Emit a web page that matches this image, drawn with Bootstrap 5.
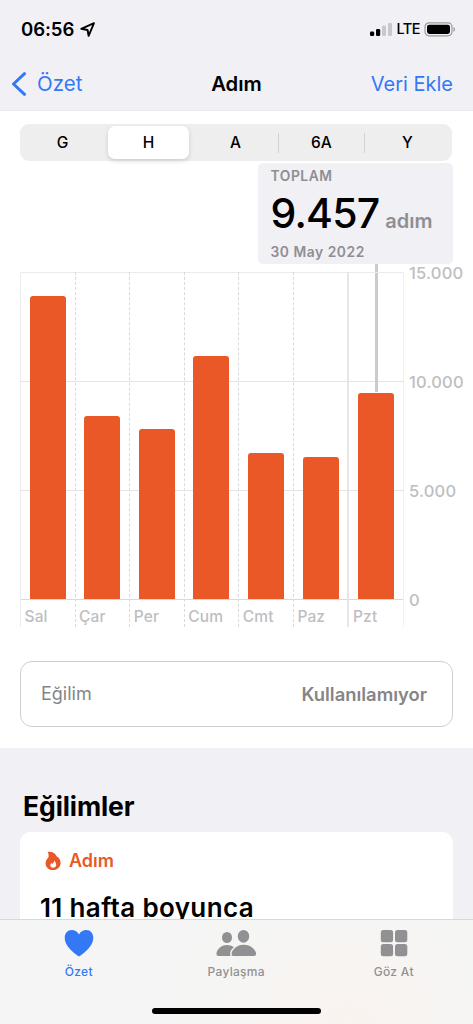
<!DOCTYPE html>
<html lang="tr">
<head>
  <meta charset="UTF-8">
  <meta name="viewport" content="width=device-width, initial-scale=1.0">
  <title>Adım</title>
  <link href="https://cdn.jsdelivr.net/npm/bootstrap@5.3.2/dist/css/bootstrap.min.css" rel="stylesheet">
  <style>
    body { font-family: Inter, "Liberation Sans", sans-serif; background-color: #f1f0f5; color: #000; }
    .phone { width: 473px; height: 1024px; line-height: 1; white-space: nowrap; }
    .blue { color: #3478f6; }
    .orange { color: #e95826; }
    .gray { color: #8e8e93; }

    .top-area { height: 111px; border-bottom: 1px solid #ebebef; }
    .status { height: 58px; padding: 0 18px 0 21px; font-weight: 600; }
    .clock { font-size: 18.6px; letter-spacing: -.1px; }
    .lte { font-size: 14.5px; font-weight: 500; letter-spacing: -.5px; margin-left: 4px; }
    .title-bar { height: 51px; padding: 0 20px; font-size: 20px; }
    .title-bar > div { flex: 1; }
    .back { font-size: 20.5px; margin-left: 10px; padding-top: 1px; }
    .chevron { margin-left: -9px; }
    .page-title { font-size: 20.3px; font-weight: 600; padding-top: 1px; }

    .chart-area { height: 637px; padding: 13px 20px 0; }
    .segments { height: 37px; width: 432px; border-radius: 9px; background-color: #eeeeef; padding: 2px; font-size: 15.5px; font-weight: 500; }
    .seg { flex: 1; height: 33px; padding-top: 1px; }
    .seg-first { flex: 0 0 81px; }
    .seg-on { flex: 0 0 81px; margin: 0 4px 0 5px; background-color: #fff; border-radius: 7px; box-shadow: 0 2px 5px rgba(0,0,0,.14); }
    .seg-line { width: 1px; height: 20px; background-color: #d2d2d6; }

    .callout { width: 195px; height: 101px; margin: 2px 0 0 238px; border-radius: 5px; background-color: #f1f0f5; padding: 6px 12.5px 0; }
    .callout-label { font-size: 13.8px; font-weight: 600; line-height: 15px; letter-spacing: .55px; }
    .big-num { font-size: 41px; font-weight: 500; line-height: 46px; margin: 6px 0 1px; letter-spacing: -.8px; }
    .unit { font-size: 20px; font-weight: 600; letter-spacing: 0; margin-left: 6px; }

    .plot { height: 355px; width: 384px; margin-top: 8px; }
    .day { flex: 1; height: 355px; border-left: 1px dashed #dadadd; }
    .day-first { border-left: 1px solid #ececee; }
    .day:last-child { border-left: 2px solid #e6e6ea; border-right: 1px solid #f1f1f3; }
    .bar-space { height: 328px; border-top: 1px solid #ebebed; border-bottom: 1px solid #d9d9dc; }
    .bar { width: 36px; margin-left: 8.7px; border-radius: 3px 3px 0 0; background-color: #e95826; }
    .day-name { font-size: 15.5px; font-weight: 500; color: #bebec1; padding: 9px 0 0 3.5px; letter-spacing: .15px; }
    .scale { height: 355px; font-size: 16.5px; font-weight: 500; color: #bebec1; width: 60px; margin: 8px 0 0 5px; letter-spacing: .2px; }
    .scale div { height: 109px; line-height: 2px; }
    .grid-row { left: 0; width: 384px; height: 1px; background-color: #e4e4e7; }
    .pointer { left: 355px; top: -8px; width: 2.5px; height: 128px; background-color: #cbcbce; }

    .trend { height: 66px; width: 433px; margin-top: 34px; border: 1px solid #cfcfd2; border-radius: 12px; padding: 0 25px 0 20px; font-size: 18px; color: #858588; }
    .trend-value { font-size: 18.4px; font-weight: 600; }

    .trends { padding: 45px 20px 0; }
    .trends h2 { font-size: 26.5px; font-weight: 700; letter-spacing: -.1px; line-height: 26px; padding-left: 3px; margin: 0 0 13px; }
    .trend-card { width: 433px; height: 110px; border-radius: 11px; background-color: #fff; padding: 19px 20px 0; }
    .card-name { font-size: 18px; font-weight: 600; margin-left: 5px; }
    .headline { font-size: 26px; font-weight: 600; line-height: 30px; margin-top: 22px; letter-spacing: .35px; }

    .tab-area { left: 0; bottom: 0; width: 473px; height: 105px; border-top: 1px solid #d8d8da; background: radial-gradient(circle at 350px 115px, #faf3ef 0, #f6f5f4 120px, #f5f5f5 190px); font-size: 12px; font-weight: 500; letter-spacing: .3px; }
    .tab-area a { width: 157.5px; color: #919193; text-decoration: none; }
    .tab-area a.blue { color: #3478f6; }
    .tab-area svg { display: block; margin: 8px auto 8px; }
    .home-line { width: 169px; height: 6px; left: 152px; bottom: 10px; border-radius: 3px; background-color: #000; }
  </style>
</head>
<body>

  <div class="phone position-relative overflow-hidden">

    <header class="top-area">
      <div class="status d-flex align-items-center justify-content-between">
        <div class="d-flex align-items-center">
          <span class="clock">06:56</span>
          <svg style="margin-left: 5px" width="17" height="17" viewBox="0 0 17 17"><path d="M2.2 7.8 15 2.2 9.600 14.800 8.600 9Z" fill="none" stroke="#000" stroke-width="1.9" stroke-linejoin="round"/></svg>
        </div>
        <div class="d-flex align-items-center">
          <svg width="22" height="15" viewBox="0 0 22 15"><rect x="0" y="9.500" width="4.200" height="4.500" rx="1.300"/><rect x="6" y="7" width="4.200" height="7" rx="1.300"/><rect x="12" y="3.500" width="4" height="10.500" rx="1.200" fill="#c9c9cd"/><rect x="18" y="1" width="4" height="13" rx="1.200" fill="#c9c9cd"/></svg>
          <span class="lte">LTE</span>
          <svg class="ms-1" width="31" height="15" viewBox="0 0 31 15"><rect x="1" y=".8" width="27" height="13" rx="4" fill="none" stroke="#9b9b9e" stroke-width="1.200"/><rect x="3" y="2.700" width="23" height="9.200" rx="2.300"/><path d="M29.500 5v5c2-.8 2-4.200 0-5Z" fill="#9b9b9e"/></svg>
        </div>
      </div>
      <div class="title-bar d-flex align-items-center">
        <div class="blue d-flex align-items-center">
          <svg class="chevron" width="16" height="24" viewBox="0 0 16 24"><path d="M13.500 1.700 2.500 12l11 10.300" fill="none" stroke="#3478f6" stroke-width="3" stroke-linecap="round" stroke-linejoin="round"/></svg>
          <span class="back">Özet</span>
        </div>
        <span class="page-title">Adım</span>
        <div class="blue text-end">Veri Ekle</div>
      </div>
    </header>

    <section class="chart-area bg-white">
      <div class="segments d-flex align-items-center">
        <div class="seg seg-first d-flex align-items-center justify-content-center">G</div>
        <div class="seg seg-on d-flex align-items-center justify-content-center">H</div>
        <div class="seg d-flex align-items-center justify-content-center">A</div>
        <div class="seg-line"></div>
        <div class="seg d-flex align-items-center justify-content-center">6A</div>
        <div class="seg-line"></div>
        <div class="seg d-flex align-items-center justify-content-center">Y</div>
      </div>

      <div class="callout">
        <div class="callout-label gray">TOPLAM</div>
        <div class="big-num">9.457<span class="unit gray">adım</span></div>
        <div class="callout-label gray">30 May 2022</div>
      </div>

      <div class="d-flex">
        <div class="plot d-flex position-relative flex-shrink-0">
          <div class="grid-row position-absolute" style="top: 109px"></div>
          <div class="grid-row position-absolute" style="top: 218px"></div>
          <div class="pointer position-absolute"></div>
          <div class="day day-first"><div class="bar-space d-flex align-items-end position-relative"><div class="bar" style="height: 92.8%"></div></div><div class="day-name">Sal</div></div>
          <div class="day"><div class="bar-space d-flex align-items-end position-relative"><div class="bar" style="height: 56.2%"></div></div><div class="day-name">Çar</div></div>
          <div class="day"><div class="bar-space d-flex align-items-end position-relative"><div class="bar" style="height: 52.2%"></div></div><div class="day-name">Per</div></div>
          <div class="day"><div class="bar-space d-flex align-items-end position-relative"><div class="bar" style="height: 74.6%"></div></div><div class="day-name">Cum</div></div>
          <div class="day"><div class="bar-space d-flex align-items-end position-relative"><div class="bar" style="height: 44.9%"></div></div><div class="day-name">Cmt</div></div>
          <div class="day"><div class="bar-space d-flex align-items-end position-relative"><div class="bar" style="height: 43.6%"></div></div><div class="day-name">Paz</div></div>
          <div class="day"><div class="bar-space d-flex align-items-end position-relative"><div class="bar" style="height: 63.1%"></div></div><div class="day-name">Pzt</div></div>
        </div>
        <div class="scale">
          <div>15.000</div>
          <div>10.000</div>
          <div>5.000</div>
          <div>0</div>
        </div>
      </div>

      <div class="trend d-flex align-items-center justify-content-between">
        <span>Eğilim</span>
        <span class="trend-value">Kullanılamıyor</span>
      </div>
    </section>

    <section class="trends">
      <h2>Eğilimler</h2>
      <div class="trend-card">
        <div class="orange d-flex align-items-center">
          <svg width="24" height="20" viewBox="0 0 24 20"><path fill="#e95826" fill-rule="evenodd" d="M7.500.800C12.500.300 15.500 2.300 16.600 5.200c2.500 1.500 4 3.900 4 6.600 0 4.300-3.200 7.300-7.500 7.300s-7.500-2.800-7.500-6.700c0-2.400.9-4.200 2.600-5.600C9 5.500 8.800 2.700 7.500.800ZM14 9.500c.2 1.800-.9 2.600-1.600 3.400-.5-.1-.8-.5-.9-.9-.8.700-1.200 1.500-1.200 2.300 0 1.500 1.200 2.500 2.900 2.500s3-1.100 3-2.700c0-1.800-.7-3.500-2.200-4.600Z"/></svg>
          <span class="card-name">Adım</span>
        </div>
        <div class="headline">11 hafta boyunca</div>
      </div>
    </section>

    <nav class="tab-area position-absolute d-flex text-center">
      <a href="#" class="blue">
        <svg width="30" height="30" viewBox="0 0 30 30"><path d="M15 28.500C8 24 .7 17.500.7 9.800.7 5.300 3.700 2 7.700 2c3.200 0 5.800 1.700 7.300 4.500C16.500 3.700 19.100 2 22.300 2c4 0 7 3.300 7 7.800C29.300 17.500 22 24 15 28.500Z" fill="#3478f6"/></svg>
        Özet
      </a>
      <a href="#">
        <svg width="40" height="30" viewBox="0 0 40 30" fill="#919193"><ellipse cx="11" cy="9.500" rx="5" ry="5.600"/><path d="M14.500 28H2.500C-.5 28 0 24 2.600 20.800 4.500 18.500 7.500 17 11 17c2.700 0 5 .8 6.800 2.200-3 2.300-4.400 5.800-3.300 8.800Z"/><ellipse cx="27.500" cy="8.300" rx="5.700" ry="6.400"/><path d="M17.700 28c-3.200 0-2.600-4 .2-7 2.400-2.700 5.700-4.200 9.800-4.200s7.700 1.500 10.100 4.200c2.800 3 3.400 7 .2 7Z"/></svg>
        Paylaşma
      </a>
      <a href="#">
        <svg width="28" height="30" viewBox="0 0 28 30" fill="#919193"><rect x=".8" y="2" width="12.300" height="12.300" rx="2.500"/><rect x="15" y="2" width="12.300" height="12.300" rx="2.500"/><rect x=".8" y="16" width="12.300" height="12.300" rx="2.500"/><rect x="15" y="16" width="12.300" height="12.300" rx="2.500"/></svg>
        Göz At
      </a>
      <div class="home-line position-absolute"></div>
    </nav>

  </div>

  <script src="https://cdn.jsdelivr.net/npm/bootstrap@5.3.2/dist/js/bootstrap.bundle.min.js"></script>
</body>
</html>
